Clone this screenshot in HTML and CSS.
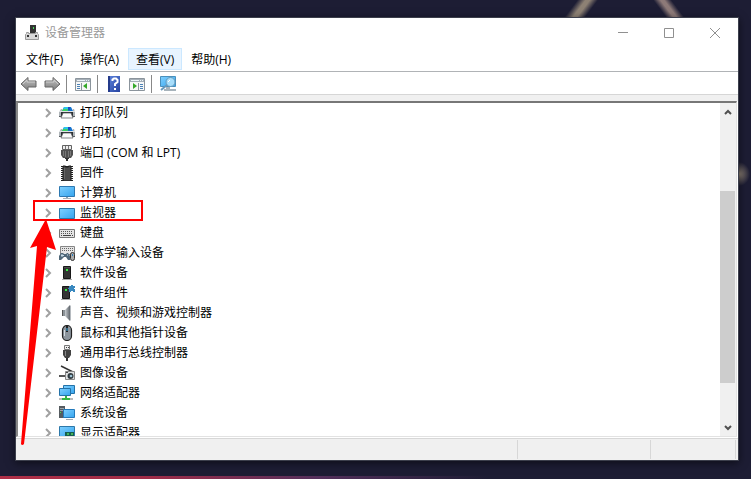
FILE: index.html
```html
<!DOCTYPE html>
<html lang="zh-CN">
<head>
<meta charset="utf-8">
<title>设备管理器</title>
<link rel="stylesheet" href="styles.css">
</head>
<body>
<svg class="sprite" aria-hidden="true">
  <defs>
    <linearGradient id="sky" x1="0" y1="0" x2="1" y2="1"><stop offset="0" stop-color="#7fd0ff"/><stop offset="1" stop-color="#35a4ee"/></linearGradient>
    <linearGradient id="steel" x1="0" y1="0" x2="0" y2="1"><stop offset="0" stop-color="#c4c4c4"/><stop offset="1" stop-color="#7b7b7b"/></linearGradient>
    <linearGradient id="cone" x1="0" y1="0" x2="1" y2="0"><stop offset="0" stop-color="#c8ccd0"/><stop offset="1" stop-color="#60666c"/></linearGradient>
    <linearGradient id="help" x1="0" y1="0" x2="1" y2="1"><stop offset="0" stop-color="#5c84dd"/><stop offset="1" stop-color="#2743a0"/></linearGradient>
  </defs>
  <symbol id="chevron" viewBox="0 0 8 10"><path d="M2 1l4 4-4 4" fill="none" stroke="#a0a0a0" stroke-width="2"/></symbol>
  <symbol id="printer" viewBox="0 0 16 16">
    <path d="M3 6l2-4h7l2 4z" fill="#1673cf"/><path d="M5 2h4v3H4z" fill="#2bc6e8"/><path d="M9 2h2v3H9z" fill="#1a50c0"/><path d="M4 4h5v2H3z" fill="#3fce63"/>
    <path d="M2 4h1v2h11V4h1l1 3v5H0V7z" fill="#aeb4b8"/><path d="M0 6h16v1H0z" fill="#dfe3e5"/><path d="M2 7h12v4H2z" fill="#2c3034"/><path d="M0 11h3v1H0zM13 11h3v1h-3z" fill="#5a5f64"/><path d="M4 8h8l2 5H2z" fill="#fafafa" stroke="#4d5256" stroke-width=".7"/>
  </symbol>
  <symbol id="port" viewBox="0 0 16 16">
    <path d="M3.500.500h9v4h-9z" fill="#eee" stroke="#626262"/><path d="M6.500 1v3M9.500 1v3" stroke="#777"/><path d="M2 5h12v5l-2 3H4l-2-3z" fill="#505050"/><path d="M4.500 6v5M6.500 6v6M9.500 6v6M11.500 6v5" stroke="#8b8b8b" stroke-width=".7"/><path d="M6 13h4v1H9v2H7v-2H6z" fill="#333"/>
  </symbol>
  <symbol id="chip" viewBox="0 0 16 16">
    <path d="M2 1.500h12M2 3.500h12M2 5.500h12M2 7.500h12M2 9.500h12M2 11.500h12M2 13.500h12M2 15.500h12" stroke="#222"/><path d="M4 1h2.500v1h3V1H12v15H4z" fill="#4c4c4c" stroke="#1a1a1a"/><path d="M5.500 3v11" stroke="#666"/>
  </symbol>
  <symbol id="computer" viewBox="0 0 16 16">
    <path d="M.5 1.500h15v10H.5z" fill="url(#sky)" stroke="#2d78b1"/><path d="M7 12h2v1H7z" fill="#8ba4b4"/><path d="M4 13.500h8" stroke="#a9b2b8"/>
  </symbol>
  <symbol id="monitor" viewBox="0 0 16 16"><path d="M.5 3.500h15v10H.5z" fill="url(#sky)" stroke="#2d78a9"/></symbol>
  <symbol id="keyboard" viewBox="0 0 16 16">
    <path d="M.5 4.500h15v8H.5z" fill="#e5e5e5" stroke="#777"/><path d="M2 6.500h12M2 8.500h12" stroke="#555" stroke-dasharray="1 1"/><path d="M2 10.500h1m1 0h8m1 0h1" stroke="#444"/>
  </symbol>
  <symbol id="hid" viewBox="0 0 16 16">
    <path d="M1.500 1.500h14v8h-14z" fill="#e5e5e5" stroke="#868686"/><path d="M3 3.500h11M3 5.500h11" stroke="#666" stroke-dasharray="1 1"/>
    <path d="M0 15V11l2-3h2l1 1h2l1-1h1l2 3v4H9l-2-3H5l-3 3z" fill="#506879"/><path d="M3 9v3M2 10.500h3M8 10h1" stroke="#c9dce9"/><rect x="11.500" y="7.500" width="4" height="8" rx="2" fill="#aaa" stroke="#333"/><path d="M13.500 9v2" stroke="#267dbc"/>
  </symbol>
  <symbol id="tower" viewBox="0 0 16 16"><path d="M4.500 1.500h7v12h-7z" fill="#343434" stroke="#171717"/><path d="M5 2h6v1H5z" fill="#4c4c4c"/><path d="M7 4h2v2H7z" fill="#39ed46"/><path d="M3 14h10v1H3z" fill="#aaa"/></symbol>
  <symbol id="component" viewBox="0 0 16 16"><path d="M3.500 1.500h7v12h-7z" fill="#343434" stroke="#171717"/><path d="M6 4h2v2H6z" fill="#39ed46"/><path d="M2 14h10v1H2z" fill="#aaa"/><path d="M10 1h2V0h2v1h2v2h-1v1h1v3h-2V6h-2v1h-2V4H9V3h1z" fill="#3988bf"/></symbol>
  <symbol id="speaker" viewBox="0 0 16 16"><path d="M3 5h4v6H3z" fill="#8c9398"/><path d="M6 5l5-5v16l-5-5z" fill="url(#cone)"/><path d="M11 0l1 1v14l-1 1z" fill="#b6bbc0"/><path d="M3 5h1v6H3z" fill="#555"/></symbol>
  <symbol id="mouse" viewBox="0 0 16 16"><rect x="3.500" y=".5" width="9" height="15" rx="4.500" fill="#8c959d" stroke="#222" stroke-width="1.200"/><path d="M5.500 5v6" stroke="#d2dae0"/><path d="M8 1v6" stroke="#222" stroke-width="2"/><path d="M8 3v3" stroke="#44b3ef"/></symbol>
  <symbol id="usb" viewBox="0 0 16 16"><path d="M5.500.500h5v4h-5z" fill="#eee" stroke="#777"/><path d="M7 2.500h1m1 0h1" stroke="#444"/><path d="M4 5h8v5l-2 3H6l-2-3z" fill="#424242"/><path d="M6.500 6v5" stroke="#888"/><path d="M8 13v3" stroke="#333" stroke-width="2"/></symbol>
  <symbol id="camera" viewBox="0 0 16 16"><path d="M2 1l12 6" stroke="#333" stroke-width="1.500"/><path d="M6.500 6.500h9v8h-9z" fill="#dfe1e2" stroke="#888"/><path d="M0 10h6v2H0z" fill="#555"/><circle cx="11.500" cy="11" r="3" fill="#313b40"/><circle cx="12" cy="11" r="1.300" fill="#9ec4d6"/><path d="M7 7.500h2" stroke="#4a4a4a"/></symbol>
  <symbol id="network" viewBox="0 0 16 16"><path d="M4.500.500h11v8h-11z" fill="url(#sky)" stroke="#2472a8"/><path d="M.5 3.500h11v7H.5z" fill="url(#sky)" stroke="#2472a8"/><path d="M0 14h14" stroke="#bbb" stroke-width="2"/><path d="M6 11h2v2h3v2H3v-2h3z" fill="#35b545"/></symbol>
  <symbol id="system" viewBox="0 0 16 16"><path d="M0 1h6v12H0z" fill="#555b60"/><path d="M1 3.500h4M1 5.500h4" stroke="#9ba3a9"/><path d="M1 7h1v1H1z" fill="#43e552"/><path d="M4.500 4.500h11v8h-11z" fill="url(#sky)" stroke="#247abb"/><path d="M7 14.500h7" stroke="#a1a9ae"/></symbol>
  <symbol id="display" viewBox="0 0 16 16"><path d="M.5 1.500h15v10H.5z" fill="url(#sky)" stroke="#2d78a9"/><path d="M6 7h9v6H6z" fill="#175e50"/><path d="M8 8h2v2H8zM12 8h2v2h-2z" fill="#42b65a"/></symbol>
</svg>

<main class="window">
  <header class="titlebar">
    <svg class="icon" viewBox="0 0 16 16" aria-hidden="true"><path d="M6 0h6v8H6z" fill="#333"/><path d="M9 2h1v2H9z" fill="#47e357"/><path d="M2.500 7.500h2v1h7v-1h2v1l1 1v5h-13v-5l1-1z" fill="#d8d8d8" stroke="#9a9a9a"/><path d="M3 10h2v2H3zM11 10h2v2h-2z" fill="#333"/></svg>
    <h1 class="title">设备管理器</h1>
    <div class="captions">
      <button class="caption" aria-label="最小化"><svg viewBox="0 0 10 10"><path d="M0 4.500h10"/></svg></button>
      <button class="caption" aria-label="最大化"><svg viewBox="0 0 10 10"><path d="M.5.500h9v9h-9z"/></svg></button>
      <button class="caption" aria-label="关闭"><svg viewBox="0 0 10 10"><path d="M0 0l10 10M10 0L0 10"/></svg></button>
    </div>
  </header>
  <nav class="menubar">
    <button class="menu">文件(F)</button>
    <button class="menu">操作(A)</button>
    <button class="menu menu-hot">查看(V)</button>
    <button class="menu">帮助(H)</button>
  </nav>
  <div class="toolbar">
    <button class="tool" aria-label="后退"><svg viewBox="0 0 18 16"><path d="M1 8l7-6.500V5h8v6H8v3.500z" fill="url(#steel)" stroke="#666"/><path d="M3 8l4-4v2h8" fill="none" stroke="#ccc"/></svg></button>
    <button class="tool" aria-label="前进"><svg viewBox="0 0 18 16"><path d="M17 8l-7-6.500V5H2v6h8v3.500z" fill="url(#steel)" stroke="#666"/><path d="M3 6h8V4l4 4" fill="none" stroke="#ccc"/></svg></button>
    <span class="divider"></span>
    <button class="tool" aria-label="显示/隐藏控制台树"><svg viewBox="0 0 18 16"><path d="M1.500 2.500h15v12h-15z" fill="#f7f7f7" stroke="#8b949c"/><path d="M2 3h14v3H2z" fill="#a5afb8"/><path d="M3 4.500h8m1 0h1m1 0h1" stroke="#eef4f8"/><path d="M7.500 7v7" stroke="#8b949c"/><path d="M3 8.500h3m-3 2h3m-3 2h3" stroke="#4b82b7"/><path d="M13 7v6l-4-3z" fill="#35a829"/></svg></button>
    <span class="divider"></span>
    <button class="tool" aria-label="帮助"><svg viewBox="0 0 18 16"><path d="M3 0h12v16H3z" fill="url(#help)"/><path d="M3 0h2v16H3z" fill="#243b8b"/><path d="M7.500 5V3.500L9 2.500h2L12.500 4v2L10 8v2m0 2v2" fill="none" stroke="#fff" stroke-width="2"/></svg></button>
    <button class="tool" aria-label="显示/隐藏操作窗格"><svg viewBox="0 0 18 16"><path d="M1.500 2.500h15v12h-15z" fill="#f7f7f7" stroke="#8b949c"/><path d="M2 3h14v3H2z" fill="#a5afb8"/><path d="M3 4.500h8m1 0h1m1 0h1" stroke="#eef4f8"/><path d="M10.500 7v7" stroke="#8b949c"/><path d="M12 8.500h3m-3 2h3m-3 2h3" stroke="#4b82b7"/><path d="M5 7v6l4-3z" fill="#35a829"/></svg></button>
    <span class="divider"></span>
    <button class="tool" aria-label="扫描检测硬件改动"><svg viewBox="0 0 18 16"><path d="M1.500.500h15v10h-15z" fill="url(#sky)" stroke="#4a90bc"/><path d="M7 11h4v2h6v2H5v-2h2z" fill="#a7b3bb"/><circle cx="11.500" cy="6" r="4.500" fill="#a8defb" stroke="#6599ba"/><path d="M8 9l-6 5" stroke="#6798bb" stroke-width="2"/><path d="M9 6l2-2" stroke="#fff"/></svg></button>
  </div>
  <div class="content">
    <section class="pane">
      <ul class="tree">
        <li class="node"><svg class="chevron"><use href="#chevron"/></svg><svg class="icon"><use href="#printer"/></svg>打印队列</li>
        <li class="node"><svg class="chevron"><use href="#chevron"/></svg><svg class="icon"><use href="#printer"/></svg>打印机</li>
        <li class="node"><svg class="chevron"><use href="#chevron"/></svg><svg class="icon"><use href="#port"/></svg>端口 (COM 和 LPT)</li>
        <li class="node"><svg class="chevron"><use href="#chevron"/></svg><svg class="icon"><use href="#chip"/></svg>固件</li>
        <li class="node"><svg class="chevron"><use href="#chevron"/></svg><svg class="icon"><use href="#computer"/></svg>计算机</li>
        <li class="node"><svg class="chevron"><use href="#chevron"/></svg><svg class="icon"><use href="#monitor"/></svg>监视器</li>
        <li class="node"><svg class="chevron"><use href="#chevron"/></svg><svg class="icon"><use href="#keyboard"/></svg>键盘</li>
        <li class="node"><svg class="chevron"><use href="#chevron"/></svg><svg class="icon"><use href="#hid"/></svg>人体学输入设备</li>
        <li class="node"><svg class="chevron"><use href="#chevron"/></svg><svg class="icon"><use href="#tower"/></svg>软件设备</li>
        <li class="node"><svg class="chevron"><use href="#chevron"/></svg><svg class="icon"><use href="#component"/></svg>软件组件</li>
        <li class="node"><svg class="chevron"><use href="#chevron"/></svg><svg class="icon"><use href="#speaker"/></svg>声音、视频和游戏控制器</li>
        <li class="node"><svg class="chevron"><use href="#chevron"/></svg><svg class="icon"><use href="#mouse"/></svg>鼠标和其他指针设备</li>
        <li class="node"><svg class="chevron"><use href="#chevron"/></svg><svg class="icon"><use href="#usb"/></svg>通用串行总线控制器</li>
        <li class="node"><svg class="chevron"><use href="#chevron"/></svg><svg class="icon"><use href="#camera"/></svg>图像设备</li>
        <li class="node"><svg class="chevron"><use href="#chevron"/></svg><svg class="icon"><use href="#network"/></svg>网络适配器</li>
        <li class="node"><svg class="chevron"><use href="#chevron"/></svg><svg class="icon"><use href="#system"/></svg>系统设备</li>
        <li class="node"><svg class="chevron"><use href="#chevron"/></svg><svg class="icon"><use href="#display"/></svg>显示适配器</li>
      </ul>
      <div class="scrollbar">
        <button class="scroll-button" aria-label="向上滚动"><svg viewBox="0 0 8 6"><path d="M1 5l3-3 3 3"/></svg></button>
        <div class="track"><div class="thumb"></div></div>
        <button class="scroll-button" aria-label="向下滚动"><svg viewBox="0 0 8 6"><path d="M1 1l3 3 3-3"/></svg></button>
      </div>
      <svg class="annotation" viewBox="0 0 126 250" aria-hidden="true">
        <path d="M16 1h108v19H16z" fill="none" stroke="#f00" stroke-width="2"/>
        <path d="M28 19L38 50l-9-3L6 244q-2 2-3 0L19 46l-7 2z" fill="#f00"/>
      </svg>
    </section>
  </div>
  <footer class="statusbar"><span class="cell cell-main"></span><span class="cell cell-wide"></span><span class="cell cell-small"></span></footer>
</main>
</body>
</html>
```
FILE: styles.css
```css
* {
  box-sizing: border-box;
}

body {
  margin: 0;
  height: 100vh;
  padding: 17px 12px 18px 15px;
  overflow: hidden;
  font: 12px/20px "Open Sans", "Noto Sans CJK SC", sans-serif;
  color: #000;
  background:
    linear-gradient(127deg, transparent 30%, #8d8174 46%, #8d8174 54%, transparent 70%) 562px 0 / 38px 18px no-repeat,
    linear-gradient(53deg, transparent 30%, #8d7a78 46%, #8d7a78 54%, transparent 70%) 653px 0 / 32px 18px no-repeat,
    radial-gradient(closest-side, #8d8174, transparent) 728px 162px / 22px 24px no-repeat,
    linear-gradient(90deg, #b03048, #a02c48 30%, #54305c 65%, transparent) 0 100% / 65% 3px no-repeat,
    #1d1d34;
}

button {
  padding: 0;
  border: 0;
  background: none;
  font: inherit;
  color: inherit;
}

svg {
  display: block;
  flex: none;
}

.sprite {
  position: absolute;
  width: 0;
  height: 0;
}

.window {
  display: flex;
  flex-direction: column;
  height: 100%;
  border: 1px solid #3c3f4c;
  background: #fff;
  box-shadow: 0 2px 8px #0008;
}

.icon {
  width: 16px;
  height: 16px;
}

.titlebar {
  display: flex;
  align-items: center;
  flex: none;
  height: 30px;
  padding-left: 8px;
  gap: 5px;
}

.title {
  flex: 1;
  margin: 0;
  font-size: 12px;
  font-weight: 400;
  color: #999;
}

.captions {
  display: flex;
}

.caption {
  display: grid;
  place-items: center;
  width: 46px;
  height: 28px;
}

.caption svg {
  width: 10px;
  height: 10px;
  fill: none;
  stroke: #909090;
}

.menubar {
  display: flex;
  flex: none;
  height: 24px;
  padding: 0 2px 1px;
  gap: 1px;
  border-bottom: 1px solid #b0b3b6;
}

.menu {
  padding: 1px 7px 0;
  border: 1px solid transparent;
}

.menu-hot {
  border-color: #cce8ff;
  background: #e8f4ff;
}

.toolbar {
  display: flex;
  align-items: center;
  flex: none;
  height: 23px;
  padding: 2px 4px 0;
  gap: 5px;
  border-bottom: 1px solid #d6d6d6;
}

.tool svg {
  width: 18px;
  height: 16px;
}

.divider {
  width: 1px;
  height: 18px;
  margin-right: 2px;
  background: #888;
}

.content {
  display: flex;
  flex: 1;
  min-height: 0;
  padding: 6px 1px 1px 0;
  background: linear-gradient(#f0f0f0 6px, #fff 6px);
}

.pane {
  position: relative;
  display: flex;
  flex: 1;
  min-width: 0;
  border: solid;
  border-width: 2px 1px 1px 2px;
  border-color: #777 #e2e2e2 #e2e2e2 #888;
}

.tree {
  flex: 1;
  margin: 0;
  padding: 0 0 0 15px;
  overflow: hidden;
  list-style: none;
}

.node {
  display: flex;
  align-items: center;
  height: 20px;
  padding-left: 11px;
  gap: 5px;
}

.chevron {
  width: 8px;
  height: 10px;
  margin-right: 2px;
}

/* Callout drawn over the tree and the status bar */
.annotation {
  position: absolute;
  left: 0;
  top: 97px;
  width: 126px;
  height: 250px;
  pointer-events: none;
}

.scrollbar {
  display: flex;
  flex-direction: column;
  width: 16px;
  background: #f0f0f0;
}

.scroll-button {
  display: grid;
  place-items: center;
  height: 17px;
}

.scroll-button svg {
  width: 8px;
  height: 6px;
  fill: none;
  stroke: #505050;
  stroke-width: 2;
}

.track {
  display: flex;
  flex: 1;
  flex-direction: column;
  justify-content: flex-end;
  padding-bottom: 36px;
}

.thumb {
  height: 73%;
  margin-right: 1px;
  background: #cdcdcd;
}

.statusbar {
  display: flex;
  flex: none;
  height: 22px;
  padding: 1px 2px 1px 0;
  border-top: 1px solid #d7d7d7;
  background: #f0f0f0;
}

.cell {
  border-right: 1px solid #d7d7d7;
}

.cell-main {
  flex: 1;
}

.cell-wide {
  width: 133px;
}

.cell-small {
  width: 85px;
}
```
